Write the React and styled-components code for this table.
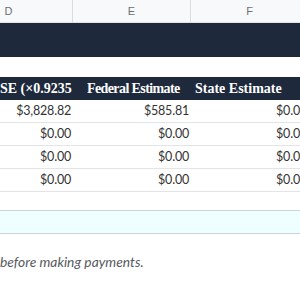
import React from 'react';
import styled, { createGlobalStyle } from 'styled-components';

const GlobalStyle = createGlobalStyle`
  html, body {
    margin: 0;
    padding: 0;
    background: #ffffff;
    overflow: hidden;
  }
`;

const Frame = styled.div`
  width: 300px;
  height: 300px;
  overflow: hidden;
  background: #ffffff;
`;

const Sheet = styled.div`
  margin-left: -55px;
  width: 364px;
`;

const Grid = styled.div`
  display: grid;
  grid-template-columns: 128px 118px 118px;
`;

const LetterRow = styled(Grid)`
  height: 22px;
  background: #f8f9fa;
  border-bottom: 1px solid #e1e3e6;
`;

const LetterCell = styled.div`
  border-right: 1px solid #dadce0;
  text-align: center;
  line-height: 23px;
  font-family: 'Liberation Sans', Arial, sans-serif;
  font-size: 11px;
  color: #6b6f75;
`;

const TitleBand = styled.div`
  height: 34px;
  background: #1e293b;
`;

const Spacer = styled.div`
  height: ${(p) => p.$h}px;
`;

const HeadRow = styled(Grid)`
  height: 23px;
  background: #1e293b;
`;

const HeadCell = styled.div`
  padding-left: ${(p) => p.$pad}px;
  white-space: nowrap;
  line-height: 23px;
  font-family: 'Liberation Serif', 'Times New Roman', serif;
  font-weight: 700;
  font-size: 14px;
  letter-spacing: ${(p) => p.$tight || 0}px;
  color: #ffffff;
`;

const DataRow = styled(Grid)`
  height: 22px;
  border-bottom: 1px solid #e2e4e7;
`;

const DataCell = styled.div`
  text-align: right;
  padding-right: 2px;
  line-height: 22px;
  font-family: Lato, 'Open Sans', sans-serif;
  font-size: 12.5px;
  letter-spacing: -0.2px;
  color: #333333;
`;

const TotalRow = styled.div`
  height: 22px;
  background: #effefe;
  border-top: 1px solid #cdd3da;
  border-bottom: 1px solid #cdd3da;
`;

const Note = styled.p`
  margin: 20px 0 0;
  line-height: 16px;
  font-family: Lato, 'Open Sans', sans-serif;
  font-style: italic;
  font-size: 13.8px;
  color: #555a60;
  white-space: nowrap;
`;

const rows = [
  ['$3,828.82', '$585.81', '$0.00'],
  ['$0.00', '$0.00', '$0.00'],
  ['$0.00', '$0.00', '$0.00'],
  ['$0.00', '$0.00', '$0.00'],
];

export default function App() {
  return (
    <Frame>
      <GlobalStyle />
      <Sheet>
        <LetterRow>
          <LetterCell>D</LetterCell>
          <LetterCell>E</LetterCell>
          <LetterCell>F</LetterCell>
        </LetterRow>
        <TitleBand />
        <Spacer $h={20} />
        <HeadRow>
          <HeadCell $pad={55}>SE (×0.9235</HeadCell>
          <HeadCell $pad={14} $tight={-0.6}>Federal Estimate</HeadCell>
          <HeadCell $pad={4}>State Estimate</HeadCell>
        </HeadRow>
        {rows.map((r, i) => (
          <DataRow key={i}>
            {r.map((v, j) => (
              <DataCell key={j}>{v}</DataCell>
            ))}
          </DataRow>
        ))}
        <Spacer $h={18} />
        <TotalRow />
      </Sheet>
      <Note>before making payments.</Note>
    </Frame>
  );
}
